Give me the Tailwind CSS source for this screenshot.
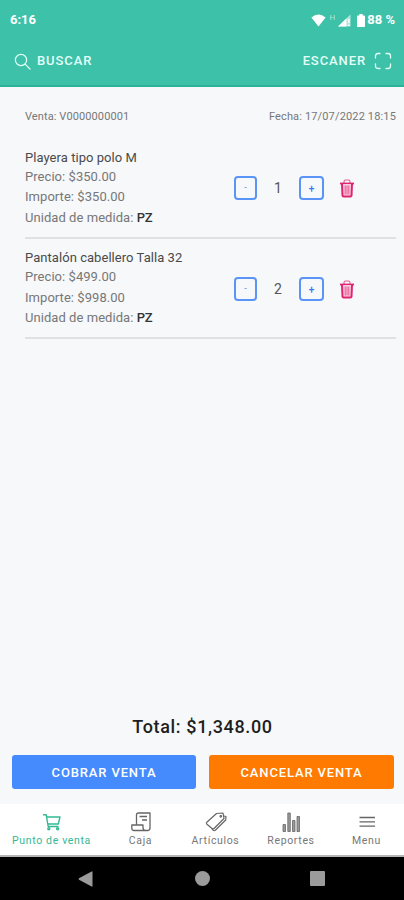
<!DOCTYPE html>
<html lang="es">
<head>
<meta charset="utf-8">
<meta name="viewport" content="width=device-width, initial-scale=1">
<title>Punto de venta</title>
<script src="https://cdn.jsdelivr.net/npm/@tailwindcss/browser@4"></script>
</head>
<body class="flex h-[900px] w-[404px] flex-col overflow-hidden bg-[#f6f8fa] font-['Roboto',sans-serif] text-[#777]">

<header class="h-[87px] shrink-0 border-b-2 border-[#2db398] bg-[#3dc1a9] text-white">
  <div class="flex h-10 items-center justify-between pr-[9px] pl-[10px] text-[13px] font-bold">
    <span>6:16</span>
    <div class="flex items-center">
      <svg class="h-[13px] w-[15px]" viewBox="0 0 15 13" fill="currentColor"><path d="M0.4 3.4Q7.5-2.2 14.6 3.4L7.5 12.5Z"/></svg>
      <span class="ml-[4px] h-4 text-[8px] font-normal text-white/60">H</span>
      <svg class="ml-[3px] h-[13px] w-[13px]" viewBox="0 0 13 13"><path d="M12.5.5V12.5H0Z" fill="white" fill-opacity=".6"/><path d="M8.5 4.3V12.5H0Z" fill="white"/><path d="M10.8 5V9M10.8 10.5V12" stroke="white" stroke-width="1.5"/></svg>
      <svg class="ml-[6px] h-[13px] w-[8px]" viewBox="0 0 8 13" fill="currentColor"><path d="M2.3 0H5.7V1.5H7.2Q8 1.5 8 2.3V12.2Q8 13 7.2 13H.8Q0 13 0 12.2V2.3Q0 1.5.8 1.5H2.3Z"/></svg>
      <span class="ml-[2px] text-[13px]">88 %</span>
    </div>
  </div>
  <div class="flex h-[42px] items-center justify-between pr-[12px] pl-[14px] text-[13px] font-medium tracking-[0.9px] text-[#e3fff8]">
    <div class="flex items-center">
      <svg class="mr-[6px] h-[17px] w-[17px]" viewBox="0 0 17 17" fill="none" stroke="currentColor" stroke-width="1.2" stroke-linecap="round"><circle cx="7" cy="7" r="5.6"/><path d="M11.1 11.1L16 16"/></svg>
      <span>BUSCAR</span>
    </div>
    <div class="flex items-center">
      <span>ESCANER</span>
      <svg class="ml-[8px] h-[18px] w-[18px]" viewBox="0 0 18 18" fill="none" stroke="currentColor" stroke-width="1.3" stroke-linecap="round"><path d="M1.5 6V4Q1.5 1.5 4 1.5H6M12 1.5H14Q16.5 1.5 16.5 4V6M16.5 12V14Q16.5 16.5 14 16.5H12M6 16.5H4Q1.5 16.5 1.5 14V12"/></svg>
    </div>
  </div>
</header>

<main class="flex-1 pr-2 pl-[25px]">
  <div class="flex h-[58px] items-center justify-between pt-[2px] text-[11px]">
    <span class="tracking-[0.1px]">Venta: V0000000001</span>
    <span class="tracking-[0.15px]">Fecha: 17/07/2022 18:15</span>
  </div>

  <section class="flex h-[94px] border-b-2 border-[#dfe1e4]">
    <div class="w-[209px] pt-[3px] text-[13px] tracking-[0.05px] whitespace-nowrap">
      <p class="h-[19px] leading-[20px] text-[#4a4a4a]">Playera tipo polo M</p>
      <p class="h-[20px] leading-[19px]">Precio: $350.00</p>
      <p class="h-[20px] leading-[20px]">Importe: $350.00</p>
      <p class="h-[20px] leading-[21px]">Unidad de medida: <b class="font-medium text-[#333]">PZ</b></p>
    </div>
    <div class="mt-[31px] flex h-6 items-center">
      <button class="flex h-6 w-[23px] items-center justify-center rounded-[4px] border-2 border-[#5b94f7] text-[9px] text-[#4a88f5]">-</button>
      <span class="w-[42px] text-center text-[14px] text-[#555]">1</span>
      <button class="flex h-6 w-[25px] items-center justify-center rounded-[4px] border-2 border-[#5b94f7] text-[10px] font-medium text-[#3579ec]">+</button>
      <svg class="ml-[15px] h-[19px] w-[16px]" viewBox="0 0 16 19" fill="none" stroke="#e0246f"><path d="M5 4V2.7Q5 1 6.5 1H9.5Q11 1 11 2.7V4" stroke-width="1.1" stroke="#e85c92"/><path d="M1 4.5H15" stroke-width="1.8"/><path d="M3 5L3.5 16.6Q3.6 17.5 4.6 17.5H11.4Q12.4 17.5 12.5 16.6L13 5" fill="#f9cfdf" stroke-width="2"/><path d="M6.2 6.5V15.5M8 6.5V15.5M9.8 6.5V15.5" stroke-width=".7"/></svg>
    </div>
  </section>

  <section class="flex h-[100px] border-b-2 border-[#dfe1e4]">
    <div class="w-[209px] pt-[9px] text-[13px] tracking-[0.05px] whitespace-nowrap">
      <p class="h-[19px] leading-[20px] text-[#4a4a4a]">Pantalón cabellero Talla 32</p>
      <p class="h-[20px] leading-[20px]">Precio: $499.00</p>
      <p class="h-[20px] leading-[21px]">Importe: $998.00</p>
      <p class="h-[20px] leading-[22px]">Unidad de medida: <b class="font-medium text-[#333]">PZ</b></p>
    </div>
    <div class="mt-[38px] flex h-6 items-center">
      <button class="flex h-6 w-[23px] items-center justify-center rounded-[4px] border-2 border-[#5b94f7] text-[9px] text-[#4a88f5]">-</button>
      <span class="w-[42px] text-center text-[14px] text-[#555]">2</span>
      <button class="flex h-6 w-[25px] items-center justify-center rounded-[4px] border-2 border-[#5b94f7] text-[10px] font-medium text-[#3579ec]">+</button>
      <svg class="ml-[15px] h-[19px] w-[16px]" viewBox="0 0 16 19" fill="none" stroke="#e0246f"><path d="M5 4V2.7Q5 1 6.5 1H9.5Q11 1 11 2.7V4" stroke-width="1.1" stroke="#e85c92"/><path d="M1 4.5H15" stroke-width="1.8"/><path d="M3 5L3.5 16.6Q3.6 17.5 4.6 17.5H11.4Q12.4 17.5 12.5 16.6L13 5" fill="#f9cfdf" stroke-width="2"/><path d="M6.2 6.5V15.5M8 6.5V15.5M9.8 6.5V15.5" stroke-width=".7"/></svg>
    </div>
  </section>
</main>

<div class="shrink-0">
  <p class="h-[43px] pl-px text-center text-[18px] leading-[29px] font-medium tracking-[0.65px] text-[#1e1e1e]">Total: $1,348.00</p>
  <div class="flex h-[49px] gap-[13px] pr-[10px] pl-[12px] text-[13px] font-medium tracking-[0.85px] text-white">
    <button class="h-[34px] w-[184px] rounded-[3px] bg-[#458bfd] pt-px">COBRAR VENTA</button>
    <button class="h-[34px] w-[185px] rounded-[3px] bg-[#ff7a00] pt-px">CANCELAR VENTA</button>
  </div>
</div>

<nav class="flex h-[53px] shrink-0 border-b-2 border-[#b5b5b5] bg-white text-[10.5px] leading-[14px] tracking-[0.65px] text-[#777]">
  <a class="flex w-[103px] flex-col items-center pt-[9px] text-[#35b994]">
    <svg class="mb-[1px] h-5 w-5" viewBox="0 0 20 20" fill="none" stroke="currentColor" stroke-width="1.4" stroke-linejoin="round"><path d="M1 1.8H4.2L6.2 13.5H16.5M4.5 4H18L16.3 11H5.8"/><circle cx="6.8" cy="15.8" r="1"/><circle cx="15.6" cy="15.8" r="1"/></svg>
    <span>Punto de venta</span>
  </a>
  <a class="flex w-[75px] flex-col items-center pt-[8px]">
    <svg class="mb-[2px] h-5 w-5" viewBox="0 0 20 20" fill="none" stroke="#666" stroke-width="1.3" stroke-linejoin="round"><path d="M5.5 12.5V3Q5.5 1 7.5 1H19V16Q19 18.5 16.5 18.5H3Q.8 18.5.8 16V13H12V15.5Q12 18.5 14.5 18.5"/><path d="M8.5 4.5H16M11 8H16"/></svg>
    <span>Caja</span>
  </a>
  <a class="flex w-[75px] flex-col items-center pt-[8px]">
    <svg class="mb-[2px] h-5 w-[22px]" viewBox="0 0 22 20" fill="none" stroke="#666" stroke-width="1.2" stroke-linejoin="round"><path d="M11.5 1.5L18 1L19 6.5L9 16.5Q8 17.5 7 16.5L1.7 12Q1 11 1.8 10.2Z"/><path d="M19 4L21 4.5L20.7 8L10.3 18.3Q9.3 19 8.3 18.3L7 16.8"/><circle cx="15.8" cy="4.3" r=".8"/></svg>
    <span>Artículos</span>
  </a>
  <a class="flex w-[76px] flex-col items-center pt-[8px]">
    <svg class="mb-[2px] h-5 w-5" viewBox="0 0 20 20" fill="#999" stroke="#666" stroke-width=".8"><path d="M2 12.5H4.5V19.5H2ZM6.8 1H9.3V19.5H6.8ZM11.5 8.5H14V19.5H11.5ZM16 4.5H18.5V19.5H16Z"/></svg>
    <span>Reportes</span>
  </a>
  <a class="flex w-[75px] flex-col items-center pt-[8px]">
    <svg class="mb-[2px] h-5 w-5" viewBox="0 0 20 20" stroke="#666" stroke-width="1.3"><path d="M2.5 5.5H18M2.5 9.8H18M2.5 14.2H18"/></svg>
    <span>Menu</span>
  </a>
</nav>

<footer class="flex h-[43px] shrink-0 items-center bg-black pl-[78px] text-[#9b9b9b]">
  <svg class="h-4 w-[15px]" viewBox="0 0 15 16" fill="currentColor"><path d="M1 7.2L13.6.4Q14.5 0 14.5 1V15Q14.5 16 13.6 15.5L1 8.8Q0 8 1 7.2Z"/></svg>
  <span class="ml-[102px] h-[15px] w-[15px] rounded-full bg-[#9b9b9b]"></span>
  <span class="ml-[100px] h-[15px] w-[15px] rounded-[1px] bg-[#9b9b9b]"></span>
</footer>
</body>
</html>
